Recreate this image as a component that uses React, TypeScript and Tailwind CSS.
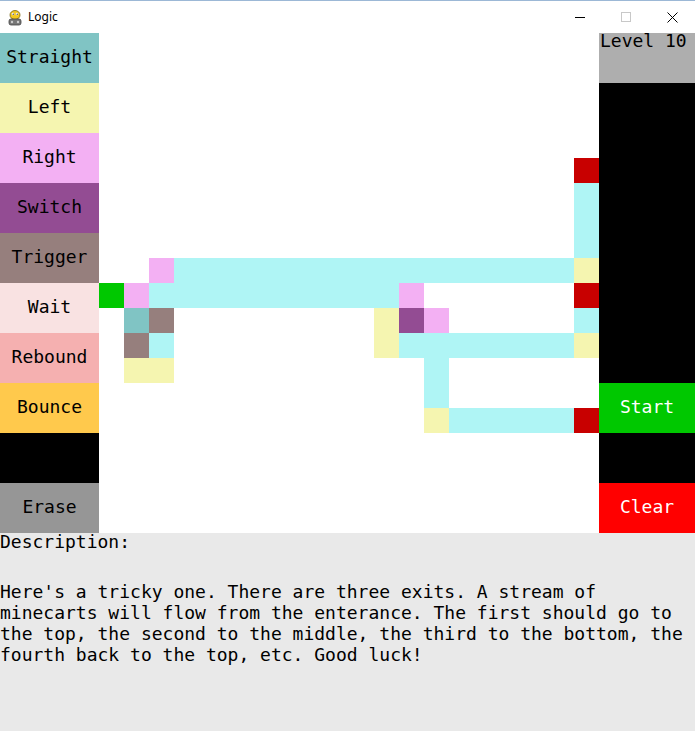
import React from 'react'

const mono = "font-['DejaVu_Sans_Mono',monospace] text-[18px]"

const tools = [
    { label: 'Straight', bg: 'bg-[#80c4c4]' },
    { label: 'Left', bg: 'bg-[#f5f5b0]' },
    { label: 'Right', bg: 'bg-[#f3b0f3]' },
    { label: 'Switch', bg: 'bg-[#934c93]' },
    { label: 'Trigger', bg: 'bg-[#967f7d]' },
    { label: 'Wait', bg: 'bg-[#f9e2e2]' },
    { label: 'Rebound', bg: 'bg-[#f5b0b0]' },
    { label: 'Bounce', bg: 'bg-[#ffc94c]' },
    { label: '', bg: 'bg-black' },
    { label: 'Erase', bg: 'bg-[#969696]' },
]

// level layout, one char per 25px cell
const board = [
    '....................',
    '....................',
    '....................',
    '....................',
    '....................',
    '...................R',
    '...................C',
    '...................C',
    '...................C',
    '..PCCCCCCCCCCCCCCCCY',
    'GPCCCCCCCCCCP......R',
    '.TB........YVP.....C',
    '.BC........YCCCCCCCY',
    '.YY..........C......',
    '.............C......',
    '.............YCCCCCR',
    '....................',
    '....................',
    '....................',
    '....................',
]

const cellColor: Record<string, string> = {
    '.': 'bg-white',
    R: 'bg-[#c80000]',
    G: 'bg-[#00c800]',
    C: 'bg-[#aff5f5]',
    Y: 'bg-[#f5f5b0]',
    P: 'bg-[#f3b0f3]',
    T: 'bg-[#80c4c4]',
    B: 'bg-[#967f7d]',
    V: 'bg-[#934c93]',
}

function SnakeIcon() {
    return (
        <svg width="16" height="16" viewBox="0 0 16 16">
            <ellipse cx="8" cy="5" rx="5" ry="4.5" fill="#f2c81e" stroke="#7a6410" strokeWidth="0.8" />
            <circle cx="6" cy="4" r="1.3" fill="#fff" />
            <circle cx="10" cy="4" r="1.3" fill="#fff" />
            <circle cx="6.2" cy="4.2" r="0.6" fill="#000" />
            <circle cx="10.2" cy="4.2" r="0.6" fill="#000" />
            <rect x="2" y="9" width="12" height="6" rx="2" fill="#777" stroke="#444" strokeWidth="0.8" />
            <circle cx="5" cy="12" r="1.2" fill="#ccc" />
            <circle cx="11" cy="12" r="1.2" fill="#ccc" />
        </svg>
    )
}

function TitleBar() {
    return (
        <div className="h-[33px] flex items-center bg-white border-t border-[#9cb8d6]">
            <div className="ml-[7px] mt-[1px]">
                <SnakeIcon />
            </div>
            <span className="ml-[5px] text-[12px] font-['Noto_Sans',sans-serif] text-black">Logic</span>
            <div className="ml-auto flex items-center h-full">
                <div className="w-[46px] h-full flex items-center justify-center">
                    <div className="w-[10px] h-px bg-black" />
                </div>
                <div className="w-[46px] h-full flex items-center justify-center">
                    <div className="w-[10px] h-[10px] border border-[#c8c8c8]" />
                </div>
                <div className="w-[46px] h-full flex items-center justify-center">
                    <svg width="11" height="11" viewBox="0 0 11 11">
                        <path d="M0.5 0.5 L10.5 10.5 M10.5 0.5 L0.5 10.5" stroke="#000" strokeWidth="1" />
                    </svg>
                </div>
            </div>
        </div>
    )
}

export default function App() {
    return (
        <div className="w-[695px] h-[731px] flex flex-col bg-white overflow-hidden">
            <TitleBar />

            <div className="flex h-[500px]">
                <div className="w-[99px] flex flex-col">
                    {tools.map((t, i) => (
                        <div key={i} className={`h-[50px] flex items-center justify-center pb-[4px] ${t.bg} ${mono} text-black`}>
                            {t.label}
                        </div>
                    ))}
                </div>

                <div className="w-[500px] grid grid-cols-[repeat(20,25px)] grid-rows-[repeat(20,25px)]">
                    {board.flatMap((row, r) =>
                        row.split('').map((ch, c) => <div key={`${r}-${c}`} className={cellColor[ch]} />)
                    )}
                </div>

                <div className={`w-[96px] flex flex-col ${mono}`}>
                    <div className="h-[50px] bg-[#aeaeae] text-black pl-px leading-[15px]">Level 10</div>
                    <div className="h-[300px] bg-black" />
                    <div className="h-[50px] bg-[#00c800] text-white flex items-center justify-center pb-[4px]">Start</div>
                    <div className="h-[50px] bg-black" />
                    <div className="h-[50px] bg-[#ff0000] text-white flex items-center justify-center pb-[4px]">Clear</div>
                </div>
            </div>

            <div className={`flex-1 bg-[#e9e9e9] text-black ${mono} leading-[21px] whitespace-pre`}>
                <div className="-mt-[2px]">Description:</div>
                <div className="mt-[29px]">
                    <div>Here's a tricky one. There are three exits. A stream of</div>
                    <div>minecarts will flow from the enterance. The first should go to</div>
                    <div>the top, the second to the middle, the third to the bottom, the</div>
                    <div>fourth back to the top, etc. Good luck!</div>
                </div>
            </div>
        </div>
    )
}
